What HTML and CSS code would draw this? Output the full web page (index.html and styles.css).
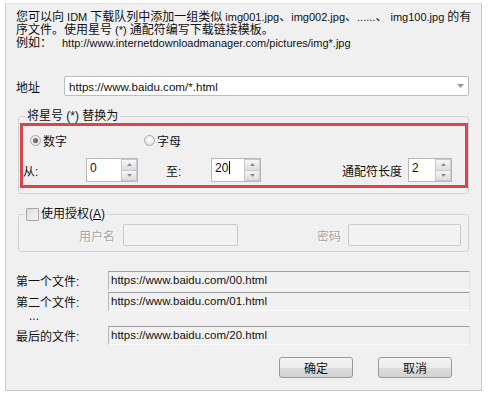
FILE: index.html
```html
<!DOCTYPE html>
<html lang="zh-CN">
<head>
<meta charset="utf-8">
<title>批量下载</title>
<link rel="stylesheet" href="styles.css">
</head>
<body>
<div class="dialog">
  <p class="intro">您可以向<span class="en"> IDM </span>下载队列中添加一组类似<span class="en"> img001.jpg</span>、<span class="en">img002.jpg</span>、<span class="en">......</span>、<span class="en"> img100.jpg </span>的有<br>序文件。使用星号<span class="en"> (*) </span>通配符编写下载链接模板。<br><span class="ex-label">例如：</span><span class="en">http://www.internetdownloadmanager.com/pictures/img*.jpg</span></p>

  <div class="addr-row">
    <span class="addr-label">地址</span>
    <div class="combo">
      <span class="combo-text">https://www.baidu.com/*.html</span>
      <svg class="combo-arrow" width="7" height="4" viewBox="0 0 7 4"><path d="M0 0h7L3.5 4z" fill="#9a9a9a"/></svg>
    </div>
  </div>

  <fieldset class="group">
    <legend class="legend">将星号 (*) 替换为</legend>
    <div class="highlight">
      <div class="radio-row">
        <label class="radio"><span class="radio-dot checked"></span>数字</label>
        <label class="radio"><span class="radio-dot"></span>字母</label>
      </div>
      <div class="spin-row">
        <span class="lbl-from">从:</span>
        <div class="spin w52">
          <span class="spin-val">0</span>
          <span class="spin-btns">
            <span class="spin-btn"><svg width="5" height="3" viewBox="0 0 5 3"><path d="M0 3h5L2.5 0z" fill="#8d8d8d"/></svg></span>
            <span class="spin-btn"><svg width="5" height="3" viewBox="0 0 5 3"><path d="M0 0h5L2.5 3z" fill="#8d8d8d"/></svg></span>
          </span>
        </div>
        <span class="lbl-to">至:</span>
        <div class="spin w50">
          <span class="spin-val">20<span class="caret"></span></span>
          <span class="spin-btns">
            <span class="spin-btn"><svg width="5" height="3" viewBox="0 0 5 3"><path d="M0 3h5L2.5 0z" fill="#8d8d8d"/></svg></span>
            <span class="spin-btn"><svg width="5" height="3" viewBox="0 0 5 3"><path d="M0 0h5L2.5 3z" fill="#8d8d8d"/></svg></span>
          </span>
        </div>
        <span class="lbl-len">通配符长度</span>
        <div class="spin w44">
          <span class="spin-val">2</span>
          <span class="spin-btns">
            <span class="spin-btn"><svg width="5" height="3" viewBox="0 0 5 3"><path d="M0 3h5L2.5 0z" fill="#8d8d8d"/></svg></span>
            <span class="spin-btn"><svg width="5" height="3" viewBox="0 0 5 3"><path d="M0 0h5L2.5 3z" fill="#8d8d8d"/></svg></span>
          </span>
        </div>
      </div>
    </div>
  </fieldset>

  <fieldset class="group auth">
    <legend class="legend legend-check"><span class="checkbox"></span>使用授权(<u>A</u>)</legend>
    <div class="auth-row">
      <span class="dis-label user">用户名</span>
      <span class="dis-input user-input"></span>
      <span class="dis-label pass">密码</span>
      <span class="dis-input pass-input"></span>
    </div>
  </fieldset>

  <div class="files">
    <div class="file-row">
      <span class="file-label">第一个文件:</span>
      <span class="file-field">https://www.baidu.com/00.html</span>
    </div>
    <div class="file-row">
      <span class="file-label">第二个文件:</span>
      <span class="file-field">https://www.baidu.com/01.html</span>
    </div>
    <div class="dots">...</div>
    <div class="file-row last">
      <span class="file-label">最后的文件:</span>
      <span class="file-field">https://www.baidu.com/20.html</span>
    </div>
  </div>

  <div class="buttons">
    <button class="btn">确定</button>
    <button class="btn">取消</button>
  </div>
</div>
</body>
</html>
```

FILE: styles.css
```css
* { box-sizing: border-box; }

html, body {
  margin: 0;
  padding: 0;
  background: #ffffff;
}

body {
  font-family: "Liberation Sans", "Noto Sans CJK SC", sans-serif;
  font-size: 12px;
  color: #111;
}

.dialog {
  margin: 3px 0 0 5px;
  width: 477px;
  height: 388px;
  background: #f0f0f0;
  border: 1px solid #c8c8c8;
  border-top-color: #e2e2e2;
  display: flex;
  flex-direction: column;
}

.intro {
  margin: 7px 0 0 10px;
  line-height: 13px;
  white-space: nowrap;
}

.en { font-size: 11px; }

.ex-label {
  display: inline-block;
  width: 46px;
}

.addr-row {
  display: flex;
  align-items: center;
  height: 20px;
  margin: 26px 0 0 10px;
}

.addr-label { width: 48px; }

.combo {
  width: 405px;
  height: 20px;
  display: flex;
  align-items: center;
  padding-left: 4px;
  font-size: 11.6px;
  background: #fff;
  border: 1px solid #b9bcc2;
  border-radius: 2px;
}

.combo-text { flex: 1; }

.combo-arrow { margin-right: 4px; }

.group {
  margin: 13px 0 0 12px;
  width: 451px;
  min-width: 0;
  padding: 0 0 5px 1px;
  border: 1px solid #d2d2d2;
  border-radius: 3px;
}

.legend {
  margin-left: 5px;
  padding: 0 2px;
  height: 14px;
  line-height: 14px;
}

.legend-check {
  display: flex;
  align-items: center;
  padding-left: 1px;
}

.highlight {
  border: 3px solid #d5474c;
  padding: 6px 0 3px 0;
}

.radio-row {
  display: flex;
  align-items: center;
  height: 16px;
  padding-left: 7px;
}

.radio {
  display: flex;
  align-items: center;
  width: 114px;
}

.radio-dot {
  width: 11px;
  height: 11px;
  margin-right: 2px;
  border-radius: 50%;
  border: 1px solid #a9a9a9;
  background: radial-gradient(circle at 50% 40%, #ffffff 0%, #e6e6e6 70%, #d6d6d6 100%);
  display: flex;
  align-items: center;
  justify-content: center;
}

.radio-dot.checked::after {
  content: "";
  width: 5px;
  height: 5px;
  border-radius: 50%;
  background: radial-gradient(circle at 40% 35%, #8a8a8a, #3c3c3c);
}

.spin-row {
  display: flex;
  align-items: center;
  height: 24px;
  margin-top: 10px;
}

.lbl-from { width: 63px; }
.lbl-to { margin-left: 28px; width: 45px; }
.lbl-len { margin-left: 81px; width: 66px; }

.spin {
  height: 24px;
  display: flex;
  background: #fff;
  border: 1px solid #b5b8bd;
}

.w52 { width: 52px; }
.w50 { width: 50px; }
.w44 { width: 44px; }

.spin-val {
  flex: 1;
  padding: 2px 0 0 3px;
  line-height: 14px;
  display: flex;
  align-items: flex-start;
}

.caret {
  display: inline-block;
  width: 1px;
  height: 13px;
  margin-left: 1px;
  background: #000;
}

.spin-btns {
  width: 16px;
  display: flex;
  flex-direction: column;
}

.spin-btn {
  flex: 1;
  display: flex;
  align-items: center;
  justify-content: center;
  border: 1px solid #c6c8cc;
  background: linear-gradient(#f7f7f7, #dcdcdc);
}

.spin-btn + .spin-btn { border-top: none; }

.checkbox {
  width: 13px;
  height: 13px;
  margin-right: 2px;
  border: 1px solid #a7a7a7;
  border-radius: 1px;
  background: linear-gradient(135deg, #dcdcdc, #f6f6f6);
}

.auth-row {
  display: flex;
  align-items: center;
  height: 22px;
  margin-top: 3px;
}

.dis-label {
  color: #a4a4a4;
  text-shadow: 1px 1px 0 #ffffff;
  text-align: right;
}

.user { width: 103px; padding-right: 8px; }
.pass { width: 110px; padding-right: 7px; }

.dis-input {
  height: 22px;
  border: 1px solid #c9c9c9;
  border-radius: 2px;
  background: #f2f2f2;
}

.user-input { width: 115px; }
.pass-input { width: 113px; }

.files {
  margin: 19px 0 0 10px;
}

.file-row {
  display: flex;
  align-items: center;
  height: 19px;
}

.file-row + .file-row { margin-top: 2px; }

.file-label { width: 92px; }

.file-field {
  width: 362px;
  height: 19px;
  line-height: 17px;
  padding-left: 2px;
  font-size: 11.5px;
  background: #f1f1f1;
  border-top: 1px solid #9e9e9e;
  border-left: 1px solid #b4b4b4;
  border-right: 1px solid #e4e4e4;
  border-bottom: 1px solid #fbfbfb;
}

.dots {
  height: 15px;
  line-height: 11px;
  padding-left: 13px;
}

.buttons {
  display: flex;
  justify-content: flex-end;
  gap: 25px;
  margin-top: 12px;
  padding-right: 29px;
}

.btn {
  width: 74px;
  height: 21px;
  padding: 0;
  font-family: "Liberation Sans", "Noto Sans CJK SC", sans-serif;
  font-size: 12px;
  color: #111;
  border: 1px solid #9a9a9a;
  border-radius: 3px;
  background: linear-gradient(#f4f4f4 0%, #ececec 50%, #dedede 51%, #d2d2d2 100%);
}
```
